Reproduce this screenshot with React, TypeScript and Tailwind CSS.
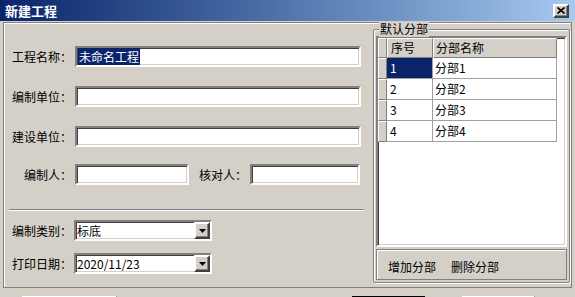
import React from 'react';

// Win2000 风格 "新建工程" 对话框
const sunken =
  'border-2 border-t-[#808080] border-l-[#808080] border-b-white border-r-white shadow-[inset_1px_1px_0_#404040,inset_-1px_-1px_0_#d4d0c8] bg-white';
const raised =
  'border-2 border-t-white border-l-white border-b-[#404040] border-r-[#404040] shadow-[inset_-1px_-1px_0_#808080,inset_1px_1px_0_#d4d0c8] bg-[#d4d0c8]';
// 表格表头用的细边框
const cellRaised = 'border border-t-white border-l-white border-b-[#808080] border-r-[#808080] bg-[#d4d0c8]';

const Field: React.FC<{ w: string; children?: React.ReactNode }> = ({ w, children }) => (
  <div className={`${sunken} ${w} h-[21px] flex items-center overflow-hidden`}>{children}</div>
);

const Combo: React.FC<{ value: string }> = ({ value }) => (
  <div className={`${sunken} w-[138px] h-[21px] flex items-center justify-between`}>
    <span className="pl-[1px] leading-none">{value}</span>
    <div className={`${raised} w-[16px] h-[17px] flex items-center justify-center`}>
      <svg width="7" height="4" viewBox="0 0 7 4">
        <path d="M0 0h7L3.5 4z" fill="#000" />
      </svg>
    </div>
  </div>
);

const rows = ['分部1', '分部2', '分部3', '分部4'];

export default function App() {
  return (
    <div className="w-[575px] h-[297px] overflow-hidden bg-[#d4d0c8] text-[12px] text-black font-['Noto_Sans_CJK_SC','Liberation_Sans',sans-serif] flex flex-col">
      {/* 标题栏 */}
      <div className="h-[21px] shrink-0 flex items-center justify-between pl-[5px] pr-[6px] bg-linear-to-r from-[#0a246a] to-[#a6caf0]">
        <span className="text-white font-bold text-[13px] leading-none">新建工程</span>
        <div className={`${raised} w-[16px] h-[14px] flex items-center justify-center`}>
          <svg width="8" height="7" viewBox="0 0 8 7">
            <path d="M0.5 0.5l7 6M7.5 0.5l-7 6" stroke="#000" strokeWidth="1.7" />
          </svg>
        </div>
      </div>

      {/* 主体 */}
      <div className="mx-[3px] mt-[1px] h-[266px] shrink-0 flex border border-[#808080] shadow-[inset_1px_1px_0_white]">
        {/* 左侧 */}
        <div className="w-[368px] flex flex-col">
          <div className="flex items-center mt-[23px]">
            <span className="w-[68px] text-right">工程名称：</span>
            <div className="ml-[3px]">
              <Field w="w-[286px]">
                <span className="ml-[1px] bg-[#0a246a] text-white leading-[17px] px-[1px]">未命名工程</span>
              </Field>
            </div>
          </div>
          <div className="flex items-center mt-[19px]">
            <span className="w-[68px] text-right">编制单位：</span>
            <div className="ml-[3px]">
              <Field w="w-[286px]" />
            </div>
          </div>
          <div className="flex items-center mt-[19px]">
            <span className="w-[68px] text-right">建设单位：</span>
            <div className="ml-[3px]">
              <Field w="w-[286px]" />
            </div>
          </div>
          <div className="flex items-center mt-[17px]">
            <span className="w-[68px] text-right">编制人：</span>
            <div className="ml-[3px]">
              <Field w="w-[114px]" />
            </div>
            <span className="ml-[10px] w-[48px]">核对人：</span>
            <div className="ml-[3px]">
              <Field w="w-[110px]" />
            </div>
          </div>
          <div className="ml-[5px] mt-[24px] w-[355px] border-t border-t-[#808080] border-b border-b-white" />
          <div className="flex items-center mt-[9px]">
            <span className="w-[68px] text-right">编制类别：</span>
            <div className="ml-[2px]">
              <Combo value="标底" />
            </div>
          </div>
          <div className="flex items-center mt-[12px]">
            <span className="w-[68px] text-right">打印日期：</span>
            <div className="ml-[2px]">
              <Combo value="2020/11/23" />
            </div>
          </div>
        </div>

        {/* 右侧 默认分部 */}
        <div className="ml-[1px] mt-[6px] w-[197px] h-[254px] relative rounded-[2px] border border-[#808080] shadow-[inset_1px_1px_0_white,1px_1px_0_white] flex flex-col">
          <span className="absolute -top-[9px] left-[5px] px-[1px] bg-[#d4d0c8] leading-[16px]">默认分部</span>
          <div className={`${sunken} ml-[2px] mt-[6px] w-[191px] h-[211px] flex flex-col`}>
            <div className="flex h-[20px]">
              <div className={`${cellRaised} w-[9px] h-full`} />
              <div className={`${cellRaised} w-[46px] h-full flex items-center pl-[3px]`}>序号</div>
              <div className={`${cellRaised} w-[124px] h-full flex items-center pl-[2px]`}>分部名称</div>
            </div>
            {rows.map((name, i) => (
              <div key={name} className="flex h-[21px]">
                <div className={`${cellRaised} w-[9px] h-full`} />
                <div
                  className={`w-[46px] h-full flex items-center pl-[3px] border-r border-b border-[#a0a0a0] ${
                    i === 0 ? 'bg-[#0a246a] text-white' : ''
                  }`}
                >
                  {i + 1}
                </div>
                <div className="w-[124px] h-full flex items-center pl-[2px] border-r border-b border-[#a0a0a0]">
                  {name}
                </div>
              </div>
            ))}
          </div>
          <div className="ml-[2px] mt-[2px] w-[191px] h-[31px] border border-[#808080] shadow-[inset_1px_1px_0_white] flex items-center pl-[11px] pt-[4px] gap-[15px]">
            <span>增加分部</span>
            <span>删除分部</span>
          </div>
        </div>
      </div>

      {/* 底部按钮 */}
      <div className="flex mt-[8px] shrink-0">
        <div className={`${raised} ml-[22px] w-[95px] h-[23px]`} />
        <div className="ml-[235px] w-[73px] h-[23px] border border-black">
          <div className={`${raised} w-full h-full`} />
        </div>
        <div className={`${raised} ml-[37px] w-[73px] h-[23px]`} />
      </div>
    </div>
  );
}
